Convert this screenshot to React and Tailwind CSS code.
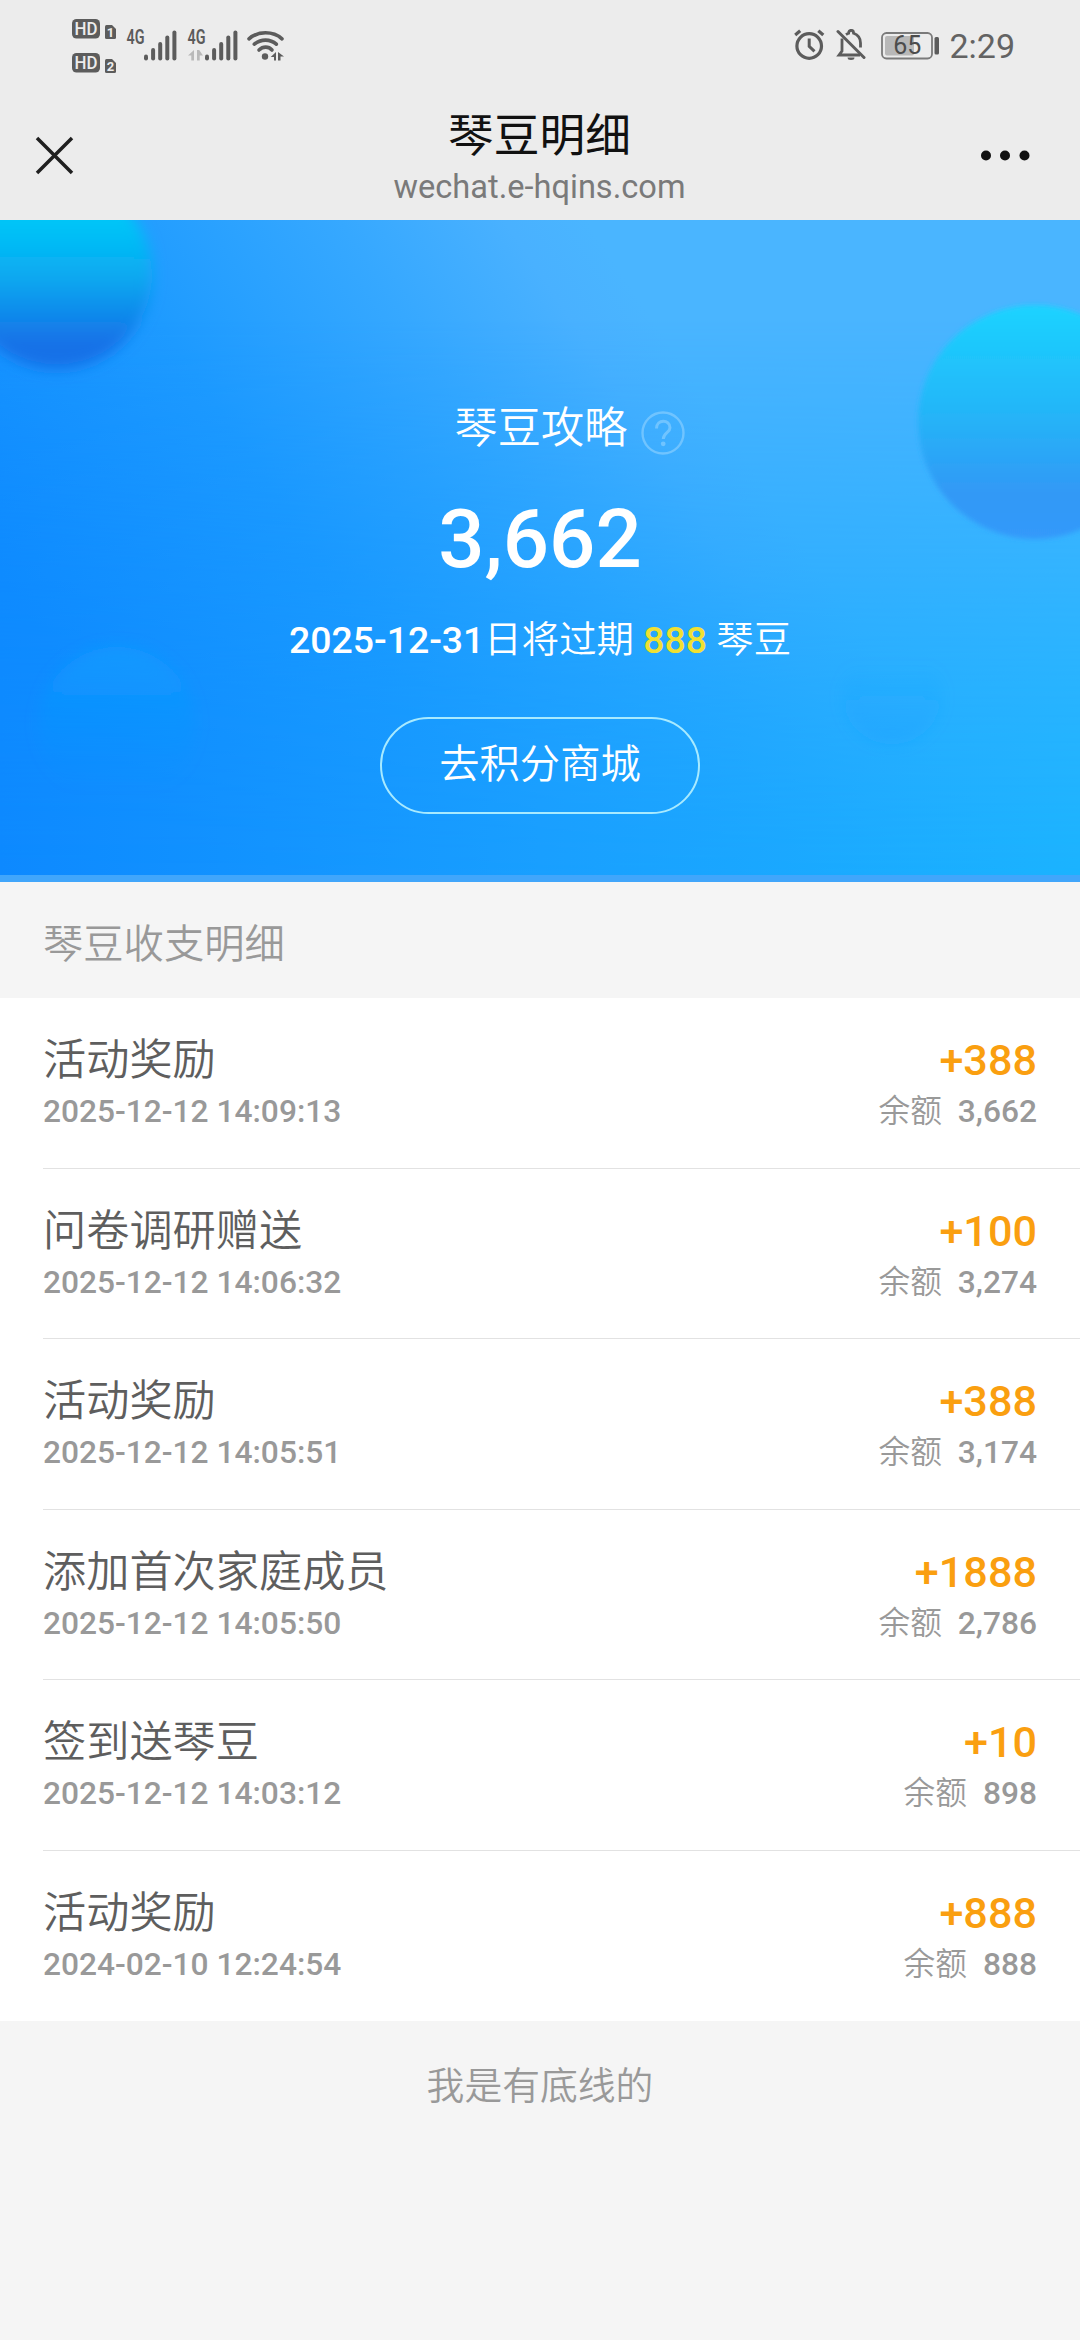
const records = [
  { id: 1, title: "活动奖励", time: "2025-12-12 14:09:13", amount: "+388", balance: "3,662" },
  { id: 2, title: "问卷调研赠送", time: "2025-12-12 14:06:32", amount: "+100", balance: "3,274" },
  { id: 3, title: "活动奖励", time: "2025-12-12 14:05:51", amount: "+388", balance: "3,174" },
  { id: 4, title: "添加首次家庭成员", time: "2025-12-12 14:05:50", amount: "+1888", balance: "2,786" },
  { id: 5, title: "签到送琴豆", time: "2025-12-12 14:03:12", amount: "+10", balance: "898" },
  { id: 6, title: "活动奖励", time: "2024-02-10 12:24:54", amount: "+888", balance: "888" },
];

const HdBadge = ({ sim }) => (
  <svg width="44" height="20" viewBox="0 0 44 20">
    <rect x="0" y="0" width="28" height="19.5" rx="4.5" fill="#5c5c5c" />
    <text x="14" y="16.2" textAnchor="middle" fontSize="18.5" fontWeight="500" fill="#ececec" textLength="23" lengthAdjust="spacingAndGlyphs">
      HD
    </text>
    <path d="M34.5 6h5.5l4 4v8.5a1.5 1.5 0 0 1-1.5 1.5h-8a1.5 1.5 0 0 1-1.5-1.5v-11a1.5 1.5 0 0 1 1.5-1.5z" fill="#5c5c5c" />
    <text x="38.4" y="17.5" textAnchor="middle" fontSize="13" fontWeight="700" fill="#ececec">
      {sim}
    </text>
  </svg>
);

const Signal = ({ data }) => (
  <svg className="overflow-visible" width="51" height="32" viewBox="0 0 51 32">
    <text x="-0.5" y="14.200" fontSize="19.500" fontWeight="600" fill="#5c5c5c" textLength="18" lengthAdjust="spacingAndGlyphs">
      4G
    </text>
    {data && (
      <g fill="#b9b9b9">
        <path d="M6 20v10.500h-2.700v-5h-3.300z" />
        <path d="M9 30.500v-10.500h2.200l3.800 5.500h-3.300v5z" />
      </g>
    )}
    <g stroke="#5c5c5c" strokeWidth="4" strokeLinecap="round">
      <path d="M19 26.500v2" />
      <path d="M26.100 20v8.500" />
      <path d="M33.200 14v14.500" />
      <path d="M40.300 7.500v21" />
      <path d="M47.400 2.500v26" />
    </g>
  </svg>
);

const Wifi = () => (
  <svg width="38" height="32" viewBox="0 0 38 32" fill="none">
    <g stroke="#5c5c5c" strokeWidth="3.600" strokeLinecap="round">
      <path d="M2 8.800c9-8 24-8 33 0" />
      <path d="M7.300 14.200c6.500-5.500 16-5.500 22 0" />
      <path d="M12 20c4-3.800 9.500-3.800 13 0" />
    </g>
    <circle cx="18" cy="26.500" r="3.200" fill="#5c5c5c" />
    <path d="M29 22v8.500h-2v-3.500h-3.300z" fill="#5c5c5c" />
    <path d="M31 30.500v-8.500l6 4.500h-3.500v4z" fill="#5c5c5c" />
  </svg>
);

const Alarm = () => (
  <svg width="31" height="32" viewBox="0 0 31 32" fill="none" stroke="#5c5c5c" strokeWidth="3.200">
    <circle cx="15.200" cy="17" r="12.300" />
    <path d="M15.200 9.500v7.800l5.300 5" strokeWidth="3" />
    <path d="M1.200 6l5-4.300" />
    <path d="M24.300 1.700l5 4.300" />
  </svg>
);

const BellOff = () => (
  <svg width="30" height="32" viewBox="0 0 30 32" fill="none" stroke="#5c5c5c" strokeWidth="3">
    <path d="M2 2.500l26 26" strokeLinecap="round" />
    <path d="M6 9.500v12.500l-3 4h21" strokeWidth="2.800" />
    <path d="M10 5.700c1-.7 1.600-1 2.600-1.400c0-4 5-4 5 0c4.500 1.600 6.900 5.200 6.900 9.700v4.500" strokeWidth="2.800" />
    <path d="M11.500 28.500a3.500 2.500 0 0 0 7 0z" fill="#5c5c5c" stroke="none" />
  </svg>
);

const Battery = () => (
  <svg width="59" height="28" viewBox="0 0 59 28">
    <rect x="1" y="1" width="50" height="25.500" rx="4.500" fill="none" stroke="#7a7a7a" strokeWidth="1.800" />
    <rect x="4" y="4" width="29" height="19.500" rx="2" fill="#b8b8b8" />
    <rect x="53.500" y="5" width="4.500" height="17.500" rx="1.500" fill="#5c5c5c" />
    <text x="26.300" y="22.300" textAnchor="middle" fontSize="25" fill="#4c4c4c" textLength="28">
      65
    </text>
  </svg>
);

const StatusBar = () => (
  <div className="flex h-[88px] items-start pl-[72px] pr-[65px]">
    <div className="mt-[19px] flex flex-col gap-[14px]">
      <HdBadge sim="1" />
      <HdBadge sim="2" />
    </div>
    <div className="ml-[10.500px] mt-[29.500px] flex">
      <Signal />
      <div className="ml-[10px]">
        <Signal data />
      </div>
      <div className="ml-[8.500px]">
        <Wifi />
      </div>
    </div>
    <div className="ml-auto flex items-start pt-[29px]">
      <Alarm />
      <div className="ml-[11px]">
        <BellOff />
      </div>
      <div className="ml-[15px] mt-[3px]">
        <Battery />
      </div>
      <span className="ml-[9px] mt-[-3px] text-[34px] leading-10 text-[#636363]">2:29</span>
    </div>
  </div>
);

const TitleBar = () => (
  <div className="flex h-[132px] items-start justify-between pl-[35px] pr-[50px]">
    <svg className="mt-[48px]" width="39" height="39" viewBox="0 0 39 39">
      <path d="M2 2l35 35M37 2L2 37" stroke="#1f1f1f" strokeWidth="3.500" />
    </svg>
    <div className="flex flex-col items-center pl-[13px]">
      <h1 className="ml-[12px] mt-[19px] text-[45.700px] leading-[60px] text-[#111111]">琴豆明细</h1>
      <p className="ml-[12px] text-[32.600px] leading-[40px] text-[#7a7a7a]">wechat.e-hqins.com</p>
    </div>
    <svg className="mt-[62px]" width="50" height="12" viewBox="0 0 50 12" fill="#111111">
      <circle cx="6" cy="5.500" r="5" />
      <circle cx="25" cy="5.500" r="5" />
      <circle cx="44.500" cy="5.500" r="5" />
    </svg>
  </div>
);

// Soft floating balls behind the points summary
const BannerArt = () => (
  <svg className="absolute inset-0" width="1080" height="662" viewBox="0 0 1080 662">
    <defs>
      <linearGradient id="base" gradientUnits="userSpaceOnUse" x1="30" y1="400" x2="600" y2="20">
        <stop offset="0" stopColor="#108dff" />
        <stop offset="0.4" stopColor="#1e9bff" />
        <stop offset="0.7" stopColor="#36a8ff" />
        <stop offset="0.9" stopColor="#49b1ff" />
        <stop offset="1" stopColor="#4ab5ff" />
      </linearGradient>
      <linearGradient id="low" gradientUnits="userSpaceOnUse" x1="0" y1="0" x2="1080" y2="0">
        <stop offset="0" stopColor="#0d89ff" />
        <stop offset="0.5" stopColor="#199fff" />
        <stop offset="1" stopColor="#1ab3ff" />
      </linearGradient>
      <linearGradient id="fade" x1="0" y1="0" x2="0" y2="1">
        <stop offset="0.15" stopColor="#fff" stopOpacity="0" />
        <stop offset="0.7" stopColor="#fff" stopOpacity="0.7" />
        <stop offset="1" stopColor="#fff" stopOpacity="1" />
      </linearGradient>
      <mask id="lowMask">
        <rect width="1080" height="662" fill="url(#fade)" />
      </mask>
      <linearGradient id="ballA" gradientUnits="userSpaceOnUse" x1="0" y1="0" x2="0" y2="145">
        <stop offset="0" stopColor="#00c6f8" />
        <stop offset="0.4" stopColor="#0aa8f0" />
        <stop offset="0.85" stopColor="#1571e7" />
      </linearGradient>
      <linearGradient id="ballB" x1="0" y1="0" x2="0" y2="1">
        <stop offset="0" stopColor="#1bd3ff" />
        <stop offset="0.45" stopColor="#24b6f8" />
        <stop offset="0.8" stopColor="#3199f6" />
        <stop offset="1" stopColor="#3499fa" />
      </linearGradient>
      <linearGradient id="ballC" x1="0" y1="0" x2="0" y2="1">
        <stop offset="0" stopColor="#109eff" stopOpacity="0.65" />
        <stop offset="0.9" stopColor="#0d94ff" stopOpacity="0" />
      </linearGradient>
      <linearGradient id="ballD" x1="0" y1="0" x2="0" y2="1">
        <stop offset="0.2" stopColor="#1f9dff" stopOpacity="0" />
        <stop offset="1" stopColor="#1c9dff" stopOpacity="0.35" />
      </linearGradient>
      <filter id="soft" x="-20%" y="-20%" width="140%" height="140%">
        <feGaussianBlur stdDeviation="7" />
      </filter>
      <filter id="crisp" x="-20%" y="-20%" width="140%" height="140%">
        <feGaussianBlur stdDeviation="2.500" />
      </filter>
    </defs>
    <rect width="1080" height="662" fill="url(#base)" />
    <rect width="1080" height="662" fill="url(#low)" mask="url(#lowMask)" />
    <circle cx="57" cy="54" r="95" fill="url(#ballA)" filter="url(#soft)" />
    <circle cx="1035" cy="202" r="117" fill="url(#ballB)" filter="url(#crisp)" />
    <circle cx="117" cy="505" r="78" fill="url(#ballC)" filter="url(#soft)" />
    <circle cx="892" cy="474" r="50" fill="url(#ballD)" filter="url(#soft)" />
    <rect y="655" width="1080" height="7" fill="#41a6fb" />
  </svg>
);

const Banner = () => (
  <section className="relative h-[662px] overflow-hidden text-white">
    <BannerArt />
    <div className="relative flex flex-col items-center">
      <div className="mt-[177px] flex items-center pl-[60px]">
        <h2 className="text-[43.200px] font-[350] leading-[64px]">琴豆攻略</h2>
        <svg className="ml-[14px] mt-[7px]" width="44" height="44" viewBox="0 0 44 44" fill="none" stroke="#70c4ff">
          <circle cx="22" cy="22" r="20.500" strokeWidth="2.400" />
          <path d="M15.500 17.500c0-9.500 13.500-9.500 13.500-.8c0 5-6.700 5-6.700 11.300" strokeWidth="3" />
          <circle cx="22.200" cy="32.800" r="2.400" fill="#70c4ff" stroke="none" />
        </svg>
      </div>
      <p className="mt-[28px] text-[81.500px] font-medium leading-[100px]">3,662</p>
      <p className="mt-[23px] text-[37.400px] font-[350] leading-[56px]">
        <span className="font-medium">2025-12-31</span>日将过期
        <span className="font-medium text-[#f0e032]"> 888 </span>琴豆
      </p>
      <button className="mt-[49px] h-[97px] w-[320px] rounded-full border-2 border-[#a8eaff] pb-[2px] text-[40.300px] font-[350] leading-[60px]">
        去积分商城
      </button>
    </div>
  </section>
);

const RecordRow = ({ record, last }) => (
  <li className="pl-[43px]">
    <div className={`flex h-[170.500px] justify-between pr-[43px] ${last ? "" : "border-b border-[#e2e2e2]"}`}>
      <div className="pt-[33px]">
        <p className="text-[43.200px] font-[350] leading-[60px] text-[#5e5e5e]">{record.title}</p>
        <p className="text-[31.700px] font-medium leading-[41px] text-[#999999]">{record.time}</p>
      </div>
      <div className="pt-[33px] text-right">
        <p className="text-[43.200px] font-medium leading-[60px] text-[#fa9f10]">{record.amount}</p>
        <p className="text-[31.700px] font-[350] leading-[41px] text-[#999999]">
          余额<span className="ml-4 font-medium">{record.balance}</span>
        </p>
      </div>
    </div>
  </li>
);

export default function App() {
  return (
    <div className="h-[2340px] w-[1080px] overflow-hidden bg-[#f5f5f5] font-['Roboto','Noto_Sans_CJK_SC',sans-serif]">
      <header className="bg-[#ececec]">
        <StatusBar />
        <TitleBar />
      </header>
      <Banner />
      <h3 className="h-[116px] pl-[43px] pt-[33px] text-[40.300px] font-[350] leading-[60px] text-[#999999]">琴豆收支明细</h3>
      <ul className="bg-white">
        {records.map((record, index) => (
          <RecordRow key={record.id} record={record} last={index === records.length - 1} />
        ))}
      </ul>
      <p className="pt-[35px] text-center text-[37.800px] font-[350] leading-[60px] text-[#999999]">我是有底线的</p>
    </div>
  );
}
